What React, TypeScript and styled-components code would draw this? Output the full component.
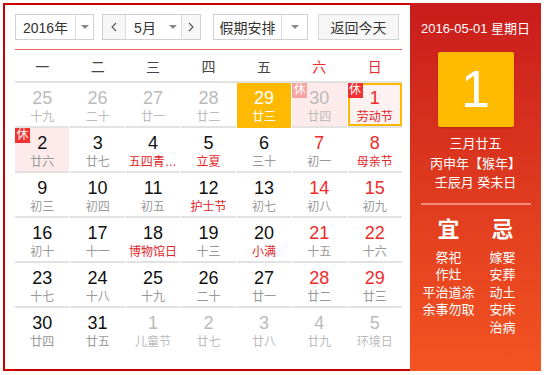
import React from 'react';
import styled, { createGlobalStyle } from 'styled-components';

const GlobalStyle = createGlobalStyle`
  html, body { margin: 0; padding: 0; background: #fff; }
  body { font-family: "Liberation Sans", "Noto Sans CJK SC", sans-serif; color: #333; }
`;

const Frame = styled.div`
  display: flex;
  margin: 3px 0 0 3px;
  width: 538px;
  height: 368px;
`;

const Main = styled.div`
  width: 407px;
  box-sizing: border-box;
  border: 2px solid #cc0000;
  border-right: none;
  padding: 9px 0 0 10px;
`;

const Content = styled.div`
  width: 387px;
`;

const ToolbarWrap = styled.div`
  padding-bottom: 9px;
  border-bottom: 1px solid #f26464;
`;

const Toolbar = styled.div`
  display: flex;
  height: 26px;
`;

const Box = styled.div<{ $w: number; $ml: number }>`
  display: flex;
  width: ${(p) => p.$w}px;
  margin-left: ${(p) => p.$ml}px;
  box-sizing: border-box;
  border: 1px solid #d0d0d0;
  background: #fff;
`;

const SelText = styled.div`
  flex: 1;
  display: flex;
  align-items: center;
  justify-content: center;
  font-size: 14px;
  color: #333;
`;

const ArrowCell = styled.div<{ $w: number; $divider?: boolean }>`
  width: ${(p) => p.$w}px;
  display: flex;
  align-items: center;
  justify-content: center;
  border-left: ${(p) => (p.$divider ? '1px solid #dcdcdc' : 'none')};
`;

const Tri = styled.span`
  width: 0;
  height: 0;
  border-left: 4px solid transparent;
  border-right: 4px solid transparent;
  border-top: 4px solid #888;
`;

const NavBtn = styled.div<{ $w: number; $side: 'l' | 'r' }>`
  width: ${(p) => p.$w}px;
  display: flex;
  align-items: center;
  justify-content: center;
  background: #f7f7f7;
  ${(p) => (p.$side === 'l' ? 'border-right: 1px solid #dcdcdc;' : 'border-left: 1px solid #dcdcdc;')}
`;

const Button = styled.div`
  width: 81px;
  margin-left: 10px;
  box-sizing: border-box;
  border: 1px solid #d6d6d6;
  background: #f7f7f7;
  display: flex;
  align-items: center;
  justify-content: center;
  font-size: 14px;
  color: #333;
`;

const Grid = styled.div`
  display: grid;
  grid-template-columns: repeat(7, minmax(0, 1fr));
  column-gap: 1px;
`;

const WeekHead = styled(Grid)`
  height: 31px;
  border-bottom: 2px solid #e2e2e2;
  align-items: center;
`;

const WeekDay = styled.div<{ $red?: boolean }>`
  text-align: center;
  font-size: 14px;
  color: ${(p) => (p.$red ? '#ee2b2b' : '#444')};
`;

type Kind = 'normal' | 'other' | 'today' | 'selected';

const Cell = styled.div<{ $kind: Kind; $rest?: boolean; $last?: boolean }>`
  position: relative;
  min-width: 0;
  height: 45px;
  box-sizing: border-box;
  padding-top: 4px;
  text-align: center;
  border-bottom: 2px solid ${(p) => (p.$last ? 'transparent' : p.$kind === 'today' ? '#ffb900' : '#e2e2e2')};
  background: ${(p) =>
    p.$kind === 'today' ? '#ffb900' : p.$kind === 'selected' ? '#fdf1f1' : p.$rest ? '#fdeaea' : '#fff'};
  box-shadow: ${(p) => (p.$kind === 'selected' ? 'inset 0 0 0 2px #ffb900' : 'none')};
`;

const DayNum = styled.div<{ $color: string }>`
  font-family: "Liberation Sans", Arial, sans-serif;
  font-size: 18px;
  line-height: 22px;
  color: ${(p) => p.$color};
`;

const Lunar = styled.div<{ $color: string }>`
  font-size: 12px;
  line-height: 16px;
  padding: 0 3px;
  white-space: nowrap;
  overflow: hidden;
  text-overflow: ellipsis;
  color: ${(p) => p.$color};
`;

const RestBadge = styled.span<{ $faded?: boolean }>`
  position: absolute;
  top: 0;
  left: 0;
  width: 15px;
  height: 15px;
  line-height: 15px;
  font-size: 12px;
  text-align: center;
  color: #fff;
  background: ${(p) => (p.$faded ? '#f5a3a3' : '#f23030')};
`;

const Side = styled.div`
  width: 131px;
  background: linear-gradient(180deg, #c91c1c 0%, #de3a1f 50%, #f45322 100%);
  display: flex;
  flex-direction: column;
  align-items: center;
  color: #fff;
`;

const SideDate = styled.div`
  margin-top: 16px;
  font-size: 13px;
  line-height: 20px;
`;

const BigDay = styled.div`
  margin-top: 13px;
  width: 76px;
  height: 75px;
  border-radius: 2px;
  background: #ffbb00;
  box-shadow: 0 1px 2px rgba(0, 0, 0, 0.15);
  text-align: center;
  font-family: "Liberation Sans", Arial, sans-serif;
  font-size: 52px;
  line-height: 75px;
  color: #fff;
`;

const LunarInfo = styled.div`
  margin-top: 7px;
  text-align: center;
  font-size: 13px;
  line-height: 19.5px;
`;

const Divider = styled.div`
  margin-top: 10px;
  width: 110px;
  height: 2px;
  background: rgba(255, 200, 200, 0.55);
`;

const YiJi = styled.div`
  margin-top: 12px;
  display: flex;
  justify-content: center;
`;

const YiJiCol = styled.div`
  width: 54px;
  text-align: center;
`;

const YiJiHead = styled.div`
  font-size: 22px;
  line-height: 26px;
  font-weight: 700;
  margin-bottom: 6px;
`;

const YiJiItem = styled.div`
  font-size: 13px;
  line-height: 17.5px;
  white-space: nowrap;
`;

const Chevron = ({ dir }: { dir: 'l' | 'r' }) => (
  <svg width="6" height="10" viewBox="0 0 6 10">
    <path d={dir === 'l' ? 'M5 1 L1 5 L5 9' : 'M1 1 L5 5 L1 9'} fill="none" stroke="#555" strokeWidth="1.1" />
  </svg>
);

type Day = {
  n: number;
  l: string;
  other?: boolean;
  wk?: boolean;
  fest?: boolean;
  rest?: boolean;
  today?: boolean;
  sel?: boolean;
};

const rows: Day[][] = [
  [
    { n: 25, l: '十九', other: true },
    { n: 26, l: '二十', other: true },
    { n: 27, l: '廿一', other: true },
    { n: 28, l: '廿二', other: true },
    { n: 29, l: '廿三', other: true, today: true },
    { n: 30, l: '廿四', other: true, rest: true },
    { n: 1, l: '劳动节', wk: true, fest: true, rest: true, sel: true },
  ],
  [
    { n: 2, l: '廿六', rest: true },
    { n: 3, l: '廿七' },
    { n: 4, l: '五四青年节', fest: true },
    { n: 5, l: '立夏', fest: true },
    { n: 6, l: '三十' },
    { n: 7, l: '初一', wk: true },
    { n: 8, l: '母亲节', wk: true, fest: true },
  ],
  [
    { n: 9, l: '初三' },
    { n: 10, l: '初四' },
    { n: 11, l: '初五' },
    { n: 12, l: '护士节', fest: true },
    { n: 13, l: '初七' },
    { n: 14, l: '初八', wk: true },
    { n: 15, l: '初九', wk: true },
  ],
  [
    { n: 16, l: '初十' },
    { n: 17, l: '十一' },
    { n: 18, l: '博物馆日', fest: true },
    { n: 19, l: '十三' },
    { n: 20, l: '小满', fest: true },
    { n: 21, l: '十五', wk: true },
    { n: 22, l: '十六', wk: true },
  ],
  [
    { n: 23, l: '十七' },
    { n: 24, l: '十八' },
    { n: 25, l: '十九' },
    { n: 26, l: '二十' },
    { n: 27, l: '廿一' },
    { n: 28, l: '廿二', wk: true },
    { n: 29, l: '廿三', wk: true },
  ],
  [
    { n: 30, l: '廿四' },
    { n: 31, l: '廿五' },
    { n: 1, l: '儿童节', other: true },
    { n: 2, l: '廿七', other: true },
    { n: 3, l: '廿八', other: true },
    { n: 4, l: '廿九', other: true },
    { n: 5, l: '环境日', other: true },
  ],
];

const weekdays = ['一', '二', '三', '四', '五', '六', '日'];

function DayCell({ d, last }: { d: Day; last: boolean }) {
  const kind: Kind = d.today ? 'today' : d.sel ? 'selected' : d.other ? 'other' : 'normal';
  let numColor = '#111';
  let lunColor = '#999';
  if (d.today) {
    numColor = '#fff';
    lunColor = '#fff';
  } else if (d.other) {
    numColor = '#bbb';
    lunColor = '#bbb';
  } else {
    if (d.wk) numColor = '#ee2b2b';
    if (d.fest) lunColor = '#e3262b';
  }
  return (
    <Cell $kind={kind} $rest={d.rest} $last={last}>
      {d.rest && <RestBadge $faded={d.other}>休</RestBadge>}
      <DayNum $color={numColor}>{d.n}</DayNum>
      <Lunar $color={lunColor}>{d.l}</Lunar>
    </Cell>
  );
}

export default function App() {
  return (
    <>
      <GlobalStyle />
      <Frame>
        <Main>
          <Content>
            <ToolbarWrap>
              <Toolbar>
                <Box $w={79} $ml={0}>
                  <SelText>2016年</SelText>
                  <ArrowCell $w={17} $divider>
                    <Tri />
                  </ArrowCell>
                </Box>
                <Box $w={99} $ml={8}>
                  <NavBtn $w={22} $side="l">
                    <Chevron dir="l" />
                  </NavBtn>
                  <SelText>5月</SelText>
                  <ArrowCell $w={17}>
                    <Tri />
                  </ArrowCell>
                  <NavBtn $w={18} $side="r">
                    <Chevron dir="r" />
                  </NavBtn>
                </Box>
                <Box $w={95} $ml={12}>
                  <SelText>假期安排</SelText>
                  <ArrowCell $w={25} $divider>
                    <Tri />
                  </ArrowCell>
                </Box>
                <Button>返回今天</Button>
              </Toolbar>
            </ToolbarWrap>
            <WeekHead>
              {weekdays.map((w, i) => (
                <WeekDay key={w} $red={i >= 5}>
                  {w}
                </WeekDay>
              ))}
            </WeekHead>
            <Grid>
              {rows.map((r, ri) =>
                r.map((d, ci) => <DayCell key={`${ri}-${ci}`} d={d} last={ri === rows.length - 1} />)
              )}
            </Grid>
          </Content>
        </Main>
        <Side>
          <SideDate>2016-05-01 星期日</SideDate>
          <BigDay>1</BigDay>
          <LunarInfo>
            <div>三月廿五</div>
            <div>丙申年【猴年】</div>
            <div>壬辰月 癸未日</div>
          </LunarInfo>
          <Divider />
          <YiJi>
            <YiJiCol>
              <YiJiHead>宜</YiJiHead>
              {['祭祀', '作灶', '平治道涂', '余事勿取'].map((t) => (
                <YiJiItem key={t}>{t}</YiJiItem>
              ))}
            </YiJiCol>
            <YiJiCol>
              <YiJiHead>忌</YiJiHead>
              {['嫁娶', '安葬', '动土', '安床', '治病'].map((t) => (
                <YiJiItem key={t}>{t}</YiJiItem>
              ))}
            </YiJiCol>
          </YiJi>
        </Side>
      </Frame>
    </>
  );
}
